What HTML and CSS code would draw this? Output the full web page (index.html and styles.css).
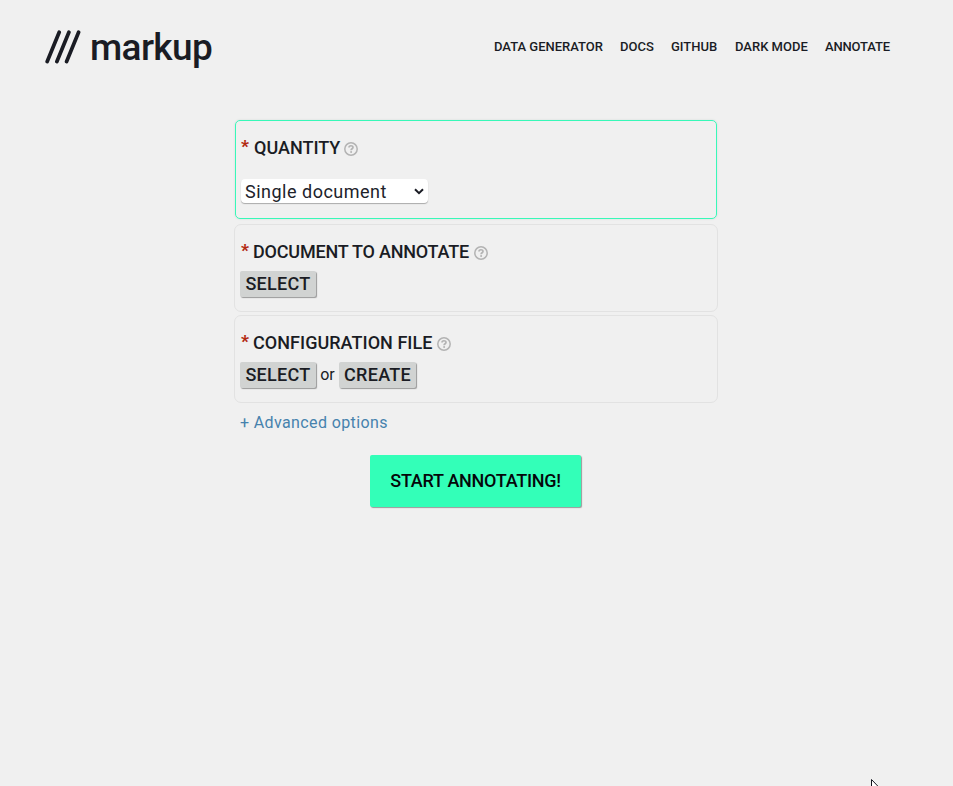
FILE: index.html
```html
<!DOCTYPE html>
<html lang="en">
<head>
<meta charset="utf-8">
<title>markup</title>
<link rel="stylesheet" href="styles.css">
</head>
<body>
<svg class="symbols" width="0" height="0"><symbol id="help" viewBox="0 0 14 14"><circle cx="7" cy="7" r="6.2" fill="none" stroke="currentColor" stroke-width="1.5"/><path d="M5 5.6C5 3.1 9 3.2 9 5.4C9 6.8 7.1 6.7 7.1 8.2" fill="none" stroke="currentColor" stroke-width="1.7"/><circle cx="7.1" cy="10" r="1" fill="currentColor"/></symbol></svg>
<header class="header">
  <a class="logo">
    <svg class="slashes" width="36" height="34" viewBox="0 0 36 34"><path d="M2.2 31.5 14.2 2.2M11.9 31.5 23.9 2.2M21.6 31.5 33.6 2.2" stroke="currentColor" stroke-width="3.7" stroke-linecap="round"/></svg>
    <span class="wordmark">markup</span>
  </a>
  <nav class="nav">
    <a class="n-data">DATA GENERATOR</a><a class="n-docs">DOCS</a><a class="n-git">GITHUB</a><a class="n-dark">DARK MODE</a><a class="n-ann">ANNOTATE</a>
  </nav>
</header>
<main class="form">
  <section class="card active">
    <h2><span class="star">*</span><span class="t-quantity">QUANTITY</span><svg class="help"><use href="#help"/></svg></h2>
    <div class="select-wrap">
      <select><option>Single document</option><option>Multiple documents</option></select>
      <svg class="chevron" width="10" height="7" viewBox="0 0 10 7"><path d="M1 1.2 5 5.2 9 1.2" fill="none" stroke="currentColor" stroke-width="2"/></svg>
    </div>
  </section>
  <section class="card">
    <h2><span class="star">*</span><span class="t-document">DOCUMENT TO ANNOTATE</span><svg class="help"><use href="#help"/></svg></h2>
    <div class="actions"><button class="btn select">SELECT</button></div>
  </section>
  <section class="card">
    <h2><span class="star">*</span><span class="t-config">CONFIGURATION FILE</span><svg class="help"><use href="#help"/></svg></h2>
    <div class="actions"><button class="btn select">SELECT</button><span class="or">or</span><button class="btn create">CREATE</button></div>
  </section>
  <a class="advanced">+ Advanced options</a>
  <button class="start">START ANNOTATING!</button>
</main>
<svg class="cursor" width="12" height="19" viewBox="0 0 12 19"><path d="M.5 .5V16.5L4 13L6.5 18L9 17L6.7 12H11.5Z" fill="#fff" stroke="#15151f"/></svg>
</body>
</html>
```
FILE: styles.css
```css
* { box-sizing: border-box; }
body { margin: 0; height: 786px; overflow: hidden; position: relative; background: #f0f0f0; color: #1a1c24; font-family: Roboto, sans-serif; }
.symbols { position: absolute; }
.header { display: flex; justify-content: space-between; height: 120px; padding: 30px 63px 0 45px; }
.logo { display: flex; height: 36px; }
.wordmark { margin-left: 9px; font-size: 37px; line-height: 35px; font-weight: 500; letter-spacing: -.65px; }
.nav { display: flex; gap: 17px; font-size: 13px; line-height: 16px; font-weight: 500; padding-top: 9px; white-space: nowrap; }
.nav a { display: block; }
.n-data { width: 109px; }
.n-docs { width: 34px; }
.n-git { width: 47px; }
.n-dark { width: 73px; }
.n-ann { width: 65px; letter-spacing: -.15px; }
.form { width: 484px; margin-left: 234px; display: flex; flex-direction: column; }
.card { height: 88px; margin-bottom: 3px; padding: 16px 6px 0; border: 1px solid #e2e2e2; border-radius: 7px; }
.card.active { height: 99px; margin: 0 1px 5px; padding: 16px 5px 0; border-color: #38f8b8; border-radius: 5px; box-shadow: 0 0 2px #ccd8d4; }
h2 { display: flex; margin: 0; height: 22px; font-size: 18px; line-height: 22px; font-weight: 500; white-space: nowrap; }
.star { width: 12px; color: #b32810; font-weight: 900; font-size: 17px; line-height: 19px; }
.card.active .star { width: 13px; }
.help { width: 14px; height: 14px; margin: 5px 0 0 5px; color: #b3b3b3; flex: none; }
.t-quantity { width: 85px; }
.t-document { width: 216px; letter-spacing: -.2px; }
.t-config { width: 179px; letter-spacing: .04px; }
.select-wrap { position: relative; width: 187px; margin-top: 20px; }
select { display: block; appearance: none; width: 187px; height: 24px; padding: 0 4px; border: 0; border-radius: 4px; background: #fff; box-shadow: 0 1px 1px #aaa; font: 400 18px/23px Roboto, sans-serif; letter-spacing: .5px; color: #20222a; }
.chevron { position: absolute; right: 4px; top: 9px; }
.actions { display: flex; margin: 8px 0 0 -1px; }
.btn, .start { border: 0; padding: 0; font: 500 18px/26px Roboto, sans-serif; color: #1a1c24; white-space: nowrap; }
.btn { height: 26px; background: #d1d3d2; border-radius: 2px; box-shadow: 1px 1px 1px #999; }
.btn.select { width: 76px; letter-spacing: .3px; }
.btn.create { width: 77px; letter-spacing: .3px; }
.or { width: 23px; text-align: center; font-size: 16px; line-height: 26px; }
.advanced { margin: 7px 0 0 6px; font-size: 16px; line-height: 20px; letter-spacing: .38px; color: #4682ad; }
.start { width: 211px; height: 52px; margin: 22px 0 0 136px; background: #33ffb8; color: #05070a; border-radius: 2px; box-shadow: 1px 1px 1px #999; letter-spacing: -.27px; }
.cursor { position: absolute; left: 871px; top: 779px; }
```
